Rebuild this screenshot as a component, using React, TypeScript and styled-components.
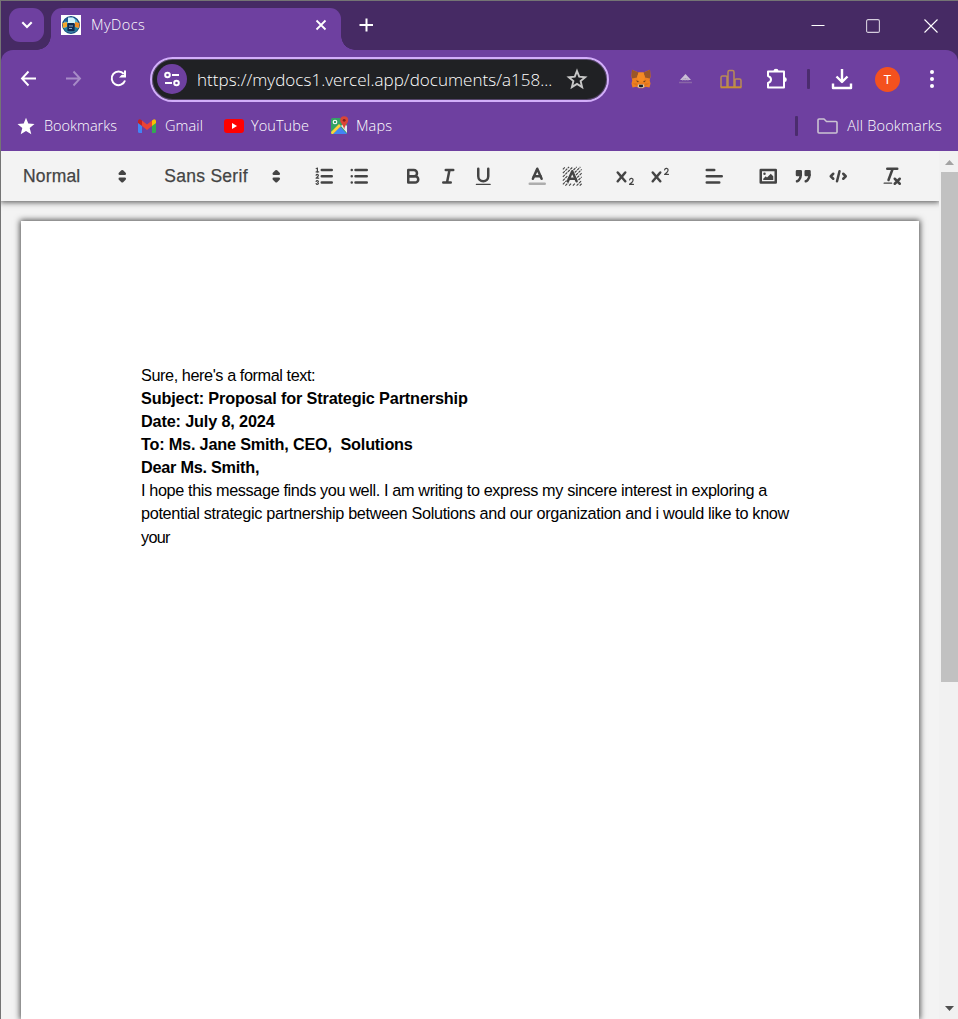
import React from "react";
import styled, { createGlobalStyle } from "styled-components";

const PURPLE = "#6e40a0";
const FRAME = "#462a64";
const INK = "#444";

const GlobalStyle = createGlobalStyle`
  * { box-sizing: border-box; }
  html, body { margin: 0; padding: 0; overflow: hidden; }
  svg { display: block; flex: none; }
`;

const Window = styled.div`
  display: flex;
  flex-direction: column;
  width: 958px;
  height: 1019px;
  overflow: hidden;
  border-top: 1px solid #747474;
  border-left: 1px solid #747474;
  background: #f3f3f3;
  font-family: "Open Sans", "Noto Sans", sans-serif;
`;

const Frame = styled.div`
  flex: none;
  background: ${FRAME};
`;

const TabStrip = styled.div`
  display: flex;
  height: 49px;
  padding: 7px 0 0 8px;
`;

const TabSearch = styled.div`
  display: grid;
  place-items: center;
  width: 35px;
  height: 34px;
  border-radius: 11px;
  background: ${PURPLE};
`;

const Tab = styled.div`
  position: relative;
  display: flex;
  align-items: center;
  width: 290px;
  height: 42px;
  margin-left: 7px;
  padding: 0 14px 8px 10px;
  border-radius: 11px 11px 0 0;
  background: ${PURPLE};

  &::before,
  &::after {
    content: "";
    position: absolute;
    bottom: 0;
    width: 14px;
    height: 14px;
  }
  &::before {
    left: -14px;
    background: radial-gradient(circle at 0 0, transparent 13.5px, ${PURPLE} 14px);
  }
  &::after {
    right: -14px;
    background: radial-gradient(circle at 100% 0, transparent 13.5px, ${PURPLE} 14px);
  }
`;

const TabTitle = styled.span`
  flex: 1;
  margin: -2px 0 0 10px;
  color: #fff;
  font-size: 14.5px;
  font-weight: 300;
  letter-spacing: 0.45px;
`;

const NewTab = styled.div`
  margin: 10px 0 0 18px;
`;

const WindowButtons = styled.div`
  display: flex;
  align-items: flex-start;
  margin: 11px 20px 0 auto;
`;

const Toolbar = styled.div`
  display: flex;
  align-items: center;
  height: 58px;
  padding: 0 17px;
  border-radius: 12px 12px 0 0;
  background: ${PURPLE};
`;

const NavButtons = styled.div`
  display: flex;
  gap: 25px;
`;

const AddressBar = styled.div`
  display: flex;
  align-items: center;
  width: 459px;
  height: 45px;
  margin-left: 22px;
  padding: 0 19px 0 5px;
  border: 2px solid #d2aefa;
  border-radius: 23px;
  background: #202124;
  box-shadow: inset 0 0 0 1px #55456a;
`;

const SiteInfo = styled.div`
  display: grid;
  place-items: center;
  flex: none;
  width: 30px;
  height: 30px;
  border-radius: 50%;
  background: ${PURPLE};
`;

const Url = styled.span`
  flex: 1;
  margin-left: 10px;
  color: #fff;
  font-size: 17px;
  font-weight: 300;
  letter-spacing: 0.03px;
  white-space: nowrap;
`;

const Extensions = styled.div`
  display: flex;
  align-items: center;
  margin-left: 21px;
`;

const Slot = styled.div<{ $gap: number }>`
  margin-left: ${(p) => p.$gap}px;
`;

const Divider = styled.div`
  width: 3px;
  height: 20px;
  border-radius: 1px;
  background: #4b2c6e;
`;

const Avatar = styled.div`
  display: grid;
  place-items: center;
  width: 25px;
  height: 25px;
  border-radius: 50%;
  background: #f4511e;
  color: #fff;
  font: 13px/1 Roboto, sans-serif;
`;

const BookmarksBar = styled.div`
  display: flex;
  align-items: center;
  height: 43px;
  padding: 0 16px 8px;
  background: ${PURPLE};
`;

const Bookmark = styled.div<{ $gap?: number; $space: number; $spacing?: number }>`
  display: flex;
  align-items: center;
  gap: ${(p) => p.$space}px;
  margin-left: ${(p) => p.$gap ?? 0}px;
  color: #fff;
  font-size: 14.5px;
  font-weight: 300;
  line-height: 20px;
  letter-spacing: ${(p) => p.$spacing ?? 0}px;
  white-space: nowrap;
`;

const AllBookmarks = styled.div`
  display: flex;
  align-items: center;
  margin-left: auto;
`;

const Viewport = styled.div`
  display: flex;
  flex: 1;
  min-height: 0;
`;

const Editor = styled.div`
  display: flex;
  flex-direction: column;
  flex: 1;
  overflow: hidden;
  background: #f3f3f3;
`;

const EditorToolbar = styled.div`
  position: relative;
  z-index: 1;
  display: flex;
  align-items: center;
  flex: none;
  height: 50px;
  padding-left: 10.75px;
  background: #f3f3f3;
  box-shadow: 0 0 6px 1px rgba(0, 0, 0, 0.7);
  color: ${INK};
`;

const Picker = styled.div<{ $width: number; $spacing: number }>`
  display: flex;
  align-items: center;
  justify-content: space-between;
  width: ${(p) => p.$width}px;
  margin-right: 18.75px;
  padding: 0 1px 0 11.25px;
  font: 500 17.5px/30px "Liberation Sans", Arial, sans-serif;
  -webkit-text-stroke: 0.25px ${INK};
  letter-spacing: ${(p) => p.$spacing}px;
  white-space: nowrap;
`;

const ButtonGroup = styled.div`
  display: flex;
  margin-right: 18.75px;
`;

const FormatButton = styled.div`
  width: 35px;
  height: 22.5px;
  padding: 0 6.25px;
`;

const Glyph = styled.svg`
  width: 22.5px;
  height: 22.5px;
  fill: none;
  stroke: ${INK};
  stroke-width: 2;
  stroke-linecap: round;
  stroke-linejoin: round;

  .thin { stroke-width: 1; }
  .fill { fill: ${INK}; stroke: none; }
  .solid { fill: ${INK}; }
  .hatch { stroke-width: 0.9; stroke-linecap: butt; stroke-dasharray: 2.2 0.6; }
`;

const Paper = styled.div`
  flex: 1;
  width: 898px;
  margin: 20px 0 0 20px;
  padding: 143px 120px 0;
  background: #fff;
  box-shadow: 0 0 6px 1px rgba(0, 0, 0, 0.7);
`;

const Line = styled.p<{ $bold?: boolean; $spacing?: number }>`
  margin: 0;
  color: #000;
  font: ${(p) => (p.$bold ? 700 : 400)} 16.25px/23.08px "Liberation Sans", Arial, sans-serif;
  letter-spacing: ${(p) => p.$spacing ?? 0}px;
  white-space: pre;
`;

const ScrollTrack = styled.div`
  display: flex;
  flex-direction: column;
  justify-content: space-between;
  width: 19px;
  background: #f1f1f1;
  padding: 9px 0 8px 2px;
`;

const ScrollThumb = styled.div`
  width: 17px;
  height: 510px;
  margin: 7px 0 auto;
  background: #c1c1c1;
`;

const Arrow = styled.svg`
  margin-left: 4px;
`;

const X_PATH =
  "M9.65,5.241a1,1,0,0,0-1.409.108L6,7.964,3.759,5.349A1,1,0,0,0,2.192,6.59178Q2.21541,6.6213,2.241,6.649L4.684,9.5,2.241,12.35A1,1,0,0,0,3.71,13.70722q0.02557-.02768.049-0.05722L6,11.036,8.241,13.65a1,1,0,1,0,1.567-1.24277Q9.78459,12.3777,9.759,12.35L7.316,9.5,9.759,6.651A1,1,0,0,0,9.65,5.241Z";

const glyphs: Record<string, React.ReactNode> = {
  picker: (
    <>
      <polygon className="solid" points="7 11 9 13 11 11 7 11" />
      <polygon className="solid" points="7 7 9 5 11 7 7 7" />
    </>
  ),
  ordered: (
    <>
      <path d="M7 4H15M7 9H15M7 14H15" />
      <path className="thin" d="M2.5 5.5H4.5" />
      <path className="fill" d="M3.5,6A0.5,0.5,0,0,1,3,5.5V3.085l-0.276.138A0.5,0.5,0,0,1,2.053,3c-0.124-.247-0.023-0.324.224-0.447l1-.5A0.5,0.5,0,0,1,4,2.5v3A0.5,0.5,0,0,1,3.5,6Z" />
      <path className="thin" d="M4.5,10.5h-2c0-.234,1.85-1.076,1.85-2.234A0.959,0.959,0,0,0,2.5,8.156" />
      <path className="thin" d="M2.5,14.846a0.959,0.959,0,0,0,1.85-.109A0.7,0.7,0,0,0,3.75,14a0.688,0.688,0,0,0,.6-0.736,0.959,0.959,0,0,0-1.85-.109" />
    </>
  ),
  bullet: <path d="M6 4H15M6 9H15M6 14H15M3 4H3M3 9H3M3 14H3" />,
  bold: (
    <>
      <path d="M5,4H9.5A2.5,2.5,0,0,1,12,6.5v0A2.5,2.5,0,0,1,9.5,9H5V4Z" />
      <path d="M5,9h5.5A2.5,2.5,0,0,1,13,11.5v0A2.5,2.5,0,0,1,10.5,14H5V9Z" />
    </>
  ),
  italic: <path d="M7 4H13M5 14H11M8 14L10 4" />,
  underline: (
    <>
      <path d="M5,3V9a4.012,4.012,0,0,0,4,4H9a4.012,4.012,0,0,0,4-4V3" />
      <rect className="fill" height="1" rx="0.5" width="12" x="3" y="15" />
    </>
  ),
  color: (
    <>
      <path d="M3 15H15" opacity="0.4" />
      <polyline points="5.5 11 9 3 12.5 11" />
      <path d="M11.63 9H6.38" />
    </>
  ),
  background: (
    <>
      <path
        className="hatch"
        d="M1.500 3.500L3.500 1.500M1.500 6.500L6.500 1.500M1.500 9.500L9.500 1.500M1.500 12.500L5.500 8.500M10 4L12.500 1.500M1.500 15.500L4.500 12.500M11 6L15.500 1.500M3.500 16.500L6 14M12 8L16.500 3.500M6.500 16.500L8.500 14.500M13 10L16.500 6.500M9.500 16.500L11.500 14.500M14 12L16.500 9.500M12.500 16.500L16.500 12.500M15 16.500L16.500 15"
      />
      <polyline points="5.5 13 9 5 12.5 13" />
      <path d="M11.63 11H6.38" />
    </>
  ),
  sub: (
    <>
      <path className="fill" d="M15.5,15H13.861a3.858,3.858,0,0,0,1.914-2.975,1.8,1.8,0,0,0-1.6-1.751A1.921,1.921,0,0,0,12.021,11.7a0.50013,0.50013,0,1,0,.957.291h0a0.914,0.914,0,0,1,1.053-.725,0.81,0.81,0,0,1,.744.762c0,1.076-1.16971,1.86982-1.93971,2.43082A1.45639,1.45639,0,0,0,12,15.5a0.5,0.5,0,0,0,.5.5h3A0.5,0.5,0,0,0,15.5,15Z" />
      <path className="fill" d={X_PATH} />
    </>
  ),
  super: (
    <>
      <path className="fill" d="M15.5,7H13.861a4.015,4.015,0,0,0,1.914-2.975,1.8,1.8,0,0,0-1.6-1.751A1.922,1.922,0,0,0,12.021,3.7a0.5,0.5,0,1,0,.957.291,0.917,0.917,0,0,1,1.053-.725,0.81,0.81,0,0,1,.744.762c0,1.077-1.164,1.925-1.934,2.486A1.423,1.423,0,0,0,12,7.5a0.5,0.5,0,0,0,.5.5h3A0.5,0.5,0,0,0,15.5,7Z" />
      <path className="fill" d={X_PATH} />
    </>
  ),
  align: <path d="M3 9H15M3 14H13M3 4H9" />,
  image: (
    <>
      <rect height="10" width="12" x="3" y="4" />
      <circle className="fill" cx="6" cy="7" r="1" />
      <polyline className="fill" points="5 12 5 11 7 9 8 10 11 7 13 9 13 12 5 12" />
    </>
  ),
  quote: (
    <>
      <rect className="solid" height="3" width="3" x="4" y="5" />
      <rect className="solid" height="3" width="3" x="11" y="5" />
      <path className="solid" d="M7,8c0,4.031-3,5-3,5" />
      <path className="solid" d="M14,8c0,4.031-3,5-3,5" />
    </>
  ),
  code: <path d="M5 7L3 9L5 11M13 7L15 9L13 11M10 5L8 13" />,
  clean: (
    <>
      <path d="M5 3H13M6 12L9.35 3M11 11L15 15M15 11L11 15" />
      <rect className="fill" height="1" rx="0.5" width="7" x="2" y="14" />
    </>
  ),
};

const groups = [
  ["ordered", "bullet"],
  ["bold", "italic", "underline"],
  ["color", "background"],
  ["sub", "super"],
  ["align"],
  ["image", "quote", "code"],
  ["clean"],
];

const Icon = ({ name }: { name: string }) => <Glyph viewBox="0 0 18 18">{glyphs[name]}</Glyph>;

const Favicon = () => (
  <svg width="20" height="20" viewBox="0 0 20 20">
    <rect width="20" height="20" fill="#fff" />
    <circle cx="10" cy="10" r="8.3" fill="#5ab9d8" stroke="#1b4f82" strokeWidth="1.400" />
    <path d="M1.500 8L6 7v5l-4 1Z" fill="#f4a52b" />
    <path d="M18.500 8L14 7v5l4 1Z" fill="#ee8c25" />
    <path d="M3 13.500L6 12v5.500ZM17 13.500L14 12v5.500Z" fill="#237f98" />
    <path d="M3.500 6.500Q5 3 7 2.500V7Z" fill="#205a90" />
    <path d="M7 2.500h5l2 2V9H7Z" fill="#d3f4fa" />
    <rect x="6.200" y="8" width="7.600" height="8.500" rx="1" fill="#102a50" />
    <path d="M8 11h4M8 13.500h3" stroke="#86aacb" />
  </svg>
);

const Fox = () => (
  <svg width="20" height="20" viewBox="0 0 20 20">
    <path d="M1 .8L7.500 3.500h5L19 .8l.5 6.700-.8 4 .8 3-1 4-4-.8L12 19.300H8l-2.500-1.600-4 .8-1-4 .8-3-.8-4Z" fill="#ef8020" />
    <path d="M1 .8L7.500 3.500 6 8.500 1.200 9.500.5 7ZM19 .8L12.500 3.500 14 8.500l4.800 1 .7-2.500Z" fill="#9a5628" />
    <path d="M6 8.500L7.500 3.500h5l1.500 5-1.500 4h-5Z" fill="#f58a24" />
    <path d="M4.800 11.500l3 .6-.8 1.300ZM15.200 11.500l-3 .6.8 1.300Z" fill="#6b3f20" />
    <path d="M1.300 14.500l4.500-.3L7 17.500M18.700 14.500l-4.500-.3L13 17.500" fill="#dd721c" />
    <path d="M7 15.500h6l.3 1.800L12 19H8l-1.300-1.700Z" fill="#d2c6bc" />
    <path d="M8.200 15.700h3.600l.3 1.800-.8.800H8.700l-.8-.8Z" fill="#1d2025" />
  </svg>
);

const App = () => (
  <>
    <GlobalStyle />
    <Window>
      <Frame>
        <TabStrip>
          <TabSearch>
            <svg width="12" height="8" viewBox="0 0 12 8" fill="none" stroke="#fff" strokeWidth="2.1">
              <path d="M1.300 1.300L6 6l4.700-4.700" />
            </svg>
          </TabSearch>
          <Tab>
            <Favicon />
            <TabTitle>MyDocs</TabTitle>
            <svg width="12" height="12" viewBox="0 0 12 12" stroke="#fff" strokeWidth="1.800">
              <path d="M1.500 1.500l9 9M10.500 1.500l-9 9" />
            </svg>
          </Tab>
          <NewTab>
            <svg width="14" height="14" viewBox="0 0 14 14" stroke="#fff" strokeWidth="2">
              <path d="M7.500 .5v13M.5 7h13.500" />
            </svg>
          </NewTab>
          <WindowButtons>
            <svg width="14" height="14" viewBox="0 0 14 14" stroke="#fff">
              <path d="M.5 6.500h13" />
            </svg>
            <Slot $gap={41}>
              <svg width="14" height="14" viewBox="0 0 14 14" fill="none" stroke="#d5cddd" strokeWidth="1.100">
                <rect x=".6" y=".6" width="12.800" height="12.800" rx="1.500" />
              </svg>
            </Slot>
            <Slot $gap={44}>
              <svg width="14" height="14" viewBox="0 0 14 14" stroke="#fff" strokeWidth="1.100">
                <path d="M.5.5l13 13M13.500.5l-13 13" />
              </svg>
            </Slot>
          </WindowButtons>
        </TabStrip>
        <Toolbar>
          <NavButtons>
            <svg width="20" height="20" viewBox="0 0 20 20" fill="none" stroke="#fff" strokeWidth="1.900">
              <path d="M18 9.500H4.500M10.500 2.500L4 9.500l6.500 7" />
            </svg>
            <svg width="20" height="20" viewBox="0 0 20 20" fill="none" stroke="#a78bc7" strokeWidth="1.900">
              <path d="M3 9.500h13.500M10.500 2.500l6.500 7-6.500 7" />
            </svg>
            <svg width="20" height="20" viewBox="0 0 20 20" fill="none" stroke="#fff" strokeWidth="2">
              <path d="M15.800 5A6.800 6.800 0 1 0 17 11.500" />
              <path d="M18 1.500v7h-7L13.500 6h2.500V1.500Z" fill="#fff" stroke="none" />
            </svg>
          </NavButtons>
          <AddressBar>
            <SiteInfo>
              <svg width="18" height="16" viewBox="0 0 18 16" fill="none" stroke="#fff" strokeWidth="2">
                <circle cx="4.500" cy="4" r="2.300" />
                <path d="M9 4h7M2 12h7" />
                <circle cx="13.500" cy="12" r="2.300" />
              </svg>
            </SiteInfo>
            <Url>https://mydocs1.vercel.app/documents/a158...</Url>
            <svg width="22" height="22" viewBox="0 0 22 22" fill="none" stroke="#c7c7c7" strokeWidth="1.900">
              <path d="M11 3l2.200 5.700 6 .5-4.600 3.900 1.500 6-5.100-3.200-5.100 3.200 1.500-6-4.600-3.900 6-.5Z" />
            </svg>
          </AddressBar>
          <Extensions>
            <Slot $gap={1}><Fox /></Slot>
            <Slot $gap={27}>
              <svg width="15" height="12" viewBox="0 0 15 12">
                <path d="M7.500 1L13 7H2Z" fill="#cbbfd6" />
                <path d="M5.500 5.500h4M4 7h7" stroke="#aa9abb" strokeDasharray="1 .6" />
                <path d="M1 9.500h13" stroke="#8966a7" strokeWidth="1.500" />
              </svg>
            </Slot>
            <Slot $gap={27}>
              <svg width="22" height="20" viewBox="0 0 22 20" fill="none" stroke="#b98a55" strokeWidth="1.500">
                <path d="M1 18V8.500q0-1.500 1.500-1.500H6q1 0 1 1V18M8 18V3q0-1.500 1.500-1.500h3Q14 1.500 14 3V18M15 18V11q0-1 1-1h3.500q1.500 0 1.500 1.500V18" />
                <path d="M.5 18.300h21" stroke="#c78f35" strokeWidth="2" />
              </svg>
            </Slot>
            <Slot $gap={24}>
              <svg width="23" height="23" viewBox="0 0 23 23" fill="none" stroke="#fff" strokeWidth="2" strokeLinejoin="round">
                <path d="M2 3.500H18V19.500H2V15Q5 14 5 11.500T2 8Z" />
                <path d="M7.500 3Q7.500 .8 10 .8T12.500 3ZM18.500 9Q20.800 9 20.800 11.500T18.500 14Z" fill="#fff" stroke="none" />
              </svg>
            </Slot>
            <Slot $gap={18}><Divider /></Slot>
            <Slot $gap={21}>
              <svg width="22" height="22" viewBox="0 0 22 22" fill="none" stroke="#fff" strokeWidth="2.400" strokeLinejoin="round">
                <path d="M11 1v12M5.500 8.500L11 14l5.500-5.500M2 15.500V20h18v-4.500" />
              </svg>
            </Slot>
            <Slot $gap={22}><Avatar>T</Avatar></Slot>
            <Slot $gap={29}>
              <svg width="6" height="20" viewBox="0 0 6 20" fill="#fff">
                <circle cx="3" cy="3" r="2" />
                <circle cx="3" cy="10" r="2" />
                <circle cx="3" cy="17" r="2" />
              </svg>
            </Slot>
          </Extensions>
        </Toolbar>
        <BookmarksBar>
          <Bookmark $space={9} $spacing={0}>
            <svg width="18" height="18" viewBox="0 0 18 18" fill="#fff">
              <path d="M9 .8l2.300 5.800 6.200.5-4.800 4 1.600 6.100L9 13.900l-5.300 3.300 1.600-6.100-4.800-4 6.200-.5Z" />
            </svg>
            Bookmarks
          </Bookmark>
          <Bookmark $gap={21} $space={9} $spacing={0.1}>
            <svg width="18" height="14" viewBox="0 0 18 14">
              <path d="M0 3v9.500Q0 14 1.500 14H4V5.500Z" fill="#4285f4" />
              <path d="M14 5.500V14h2.500q1.500 0 1.500-1.500V3Z" fill="#34a853" />
              <path d="M4 1.500l5 4 5-4V7l-5 4-5-4Z" fill="#ea4335" />
              <path d="M0 3V2Q0 .2 2 .2L4 1.500V7L0 4Z" fill="#c5221f" />
              <path d="M18 3V2Q18 .2 16 .2L14 1.500V7l4-3Z" fill="#fbbc04" />
            </svg>
            Gmail
          </Bookmark>
          <Bookmark $gap={21} $space={7} $spacing={0.05}>
            <svg width="20" height="14" viewBox="0 0 20 14">
              <rect width="20" height="14" rx="3" fill="#f00" />
              <path d="M8 4l5 3-5 3Z" fill="#fff" />
            </svg>
            YouTube
          </Bookmark>
          <Bookmark $gap={21} $space={7} $spacing={0.15}>
            <svg width="19" height="19" viewBox="0 0 19 19">
              <rect x="1" y="2" width="16" height="16" rx="1.500" fill="#34a265" />
              <path d="M3 18L10 10.500 17 18Z" fill="#4285f4" />
              <path d="M11 10l3-3 3 3v7Z" fill="#e8eaed" />
              <path d="M1 16L9 8l2 2-8 8H1.500Z" fill="#fdd23c" />
              <circle cx="5" cy="6" r="1.800" fill="none" stroke="#fff" strokeWidth="1.100" />
              <path d="M14.200.2a4 4 0 0 0-4 4c0 3 3 4 4 9 1-5 4-6 4-9a4 4 0 0 0-4-4Z" fill="#db4437" />
              <circle cx="14.200" cy="4.300" r="1.400" fill="#7b231d" />
            </svg>
            Maps
          </Bookmark>
          <AllBookmarks>
            <Divider />
            <Bookmark $gap={19} $space={9} $spacing={0.2}>
              <svg width="21" height="16" viewBox="0 0 21 16" fill="none" stroke="#cbc3d2" strokeWidth="1.600" strokeLinejoin="round">
                <path d="M1 2q0-1 1-1h5l2.500 2.500H19q1 0 1 1V14q0 1-1 1H2q-1 0-1-1Z" />
              </svg>
              All Bookmarks
            </Bookmark>
          </AllBookmarks>
        </BookmarksBar>
      </Frame>
      <Viewport>
        <Editor>
          <EditorToolbar>
            <Picker $width={122.5} $spacing={0.15}>
              Normal
              <Icon name="picker" />
            </Picker>
            <Picker $width={135} $spacing={0.28}>
              Sans Serif
              <Icon name="picker" />
            </Picker>
            {groups.map((names) => (
              <ButtonGroup key={names[0]}>
                {names.map((name) => (
                  <FormatButton key={name}>
                    <Icon name={name} />
                  </FormatButton>
                ))}
              </ButtonGroup>
            ))}
          </EditorToolbar>
          <Paper>
            <Line $spacing={-0.42}>Sure, here's a formal text:</Line>
            <Line $bold $spacing={-0.15}>Subject: Proposal for Strategic Partnership</Line>
            <Line $bold $spacing={-0.16}>Date: July 8, 2024</Line>
            <Line $bold $spacing={-0.2}>To: Ms. Jane Smith, CEO,  Solutions</Line>
            <Line $bold $spacing={-0.25}>Dear Ms. Smith,</Line>
            <Line $spacing={-0.375}>I hope this message finds you well. I am writing to express my sincere interest in exploring a</Line>
            <Line $spacing={-0.33}>potential strategic partnership between Solutions and our organization and i would like to know</Line>
            <Line $spacing={-0.7}>your</Line>
          </Paper>
        </Editor>
        <ScrollTrack>
          <Arrow width="9" height="5" viewBox="0 0 9 5">
            <path d="M0 5L4.500 0 9 5Z" fill="#a3a3a3" />
          </Arrow>
          <ScrollThumb />
          <Arrow width="9" height="5" viewBox="0 0 9 5">
            <path d="M0 0L4.500 5 9 0Z" fill="#505050" />
          </Arrow>
        </ScrollTrack>
      </Viewport>
    </Window>
  </>
);

export default App;
